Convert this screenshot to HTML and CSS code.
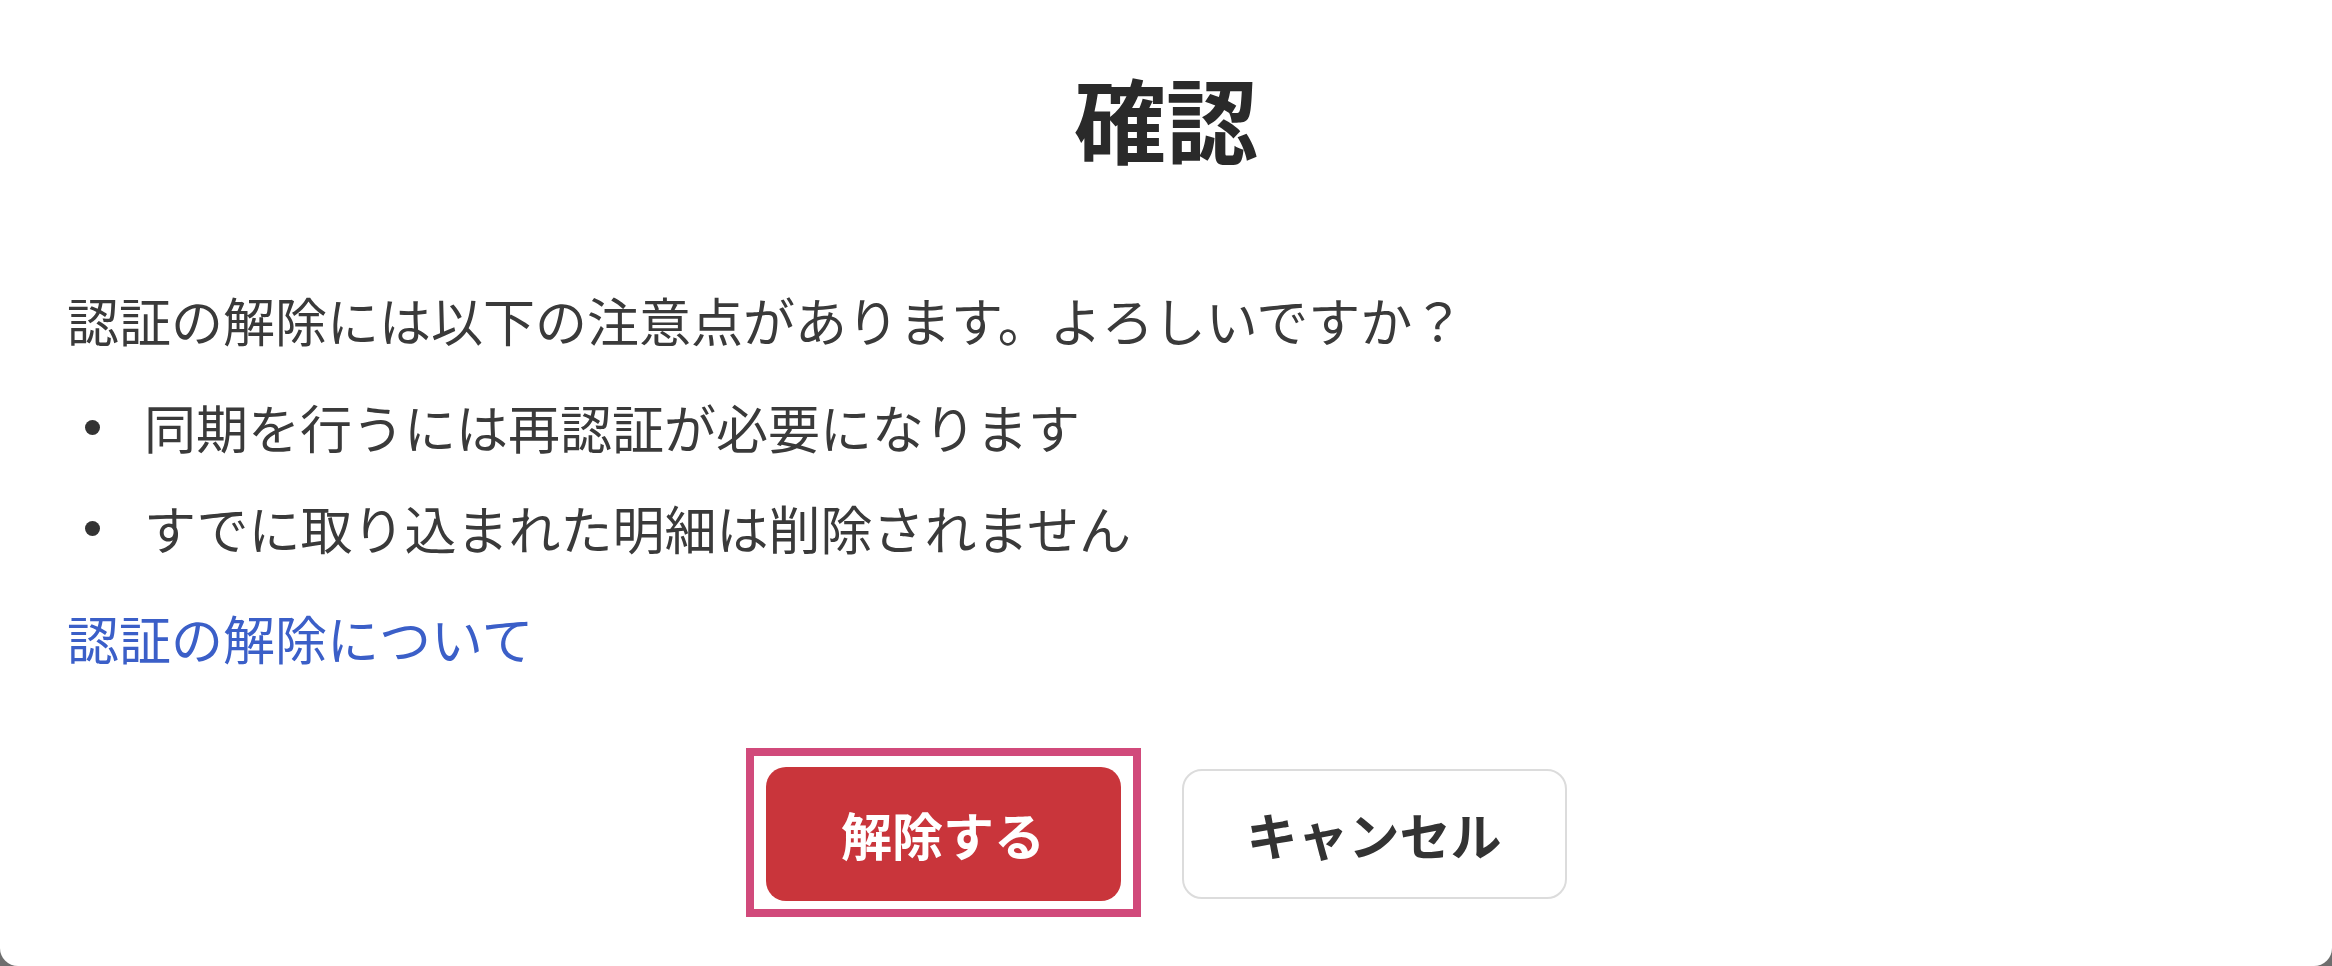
FILE: index.html
```html
<!DOCTYPE html>
<html lang="ja">
<head>
<meta charset="utf-8">
<title>確認</title>
<link rel="stylesheet" href="styles.css">
</head>
<body>
<div class="dialog">
  <h1 class="title">確認</h1>
  <p class="message">認証の解除には以下の注意点があります。よろしいですか？</p>
  <ul class="notes">
    <li class="note">同期を行うには再認証が必要になります</li>
    <li class="note">すでに取り込まれた明細は削除されません</li>
  </ul>
  <a class="help-link" href="#">認証の解除について</a>
  <div class="actions">
    <button class="btn btn-danger">解除する</button>
    <button class="btn btn-cancel">キャンセル</button>
  </div>
</div>
</body>
</html>
```
FILE: styles.css
```css
html, body {
  margin: 0;
  padding: 0;
}
body {
  background: #6e6e6e;
  width: 2332px;
  height: 966px;
  overflow: hidden;
  font-family: "Noto Sans CJK JP", "Noto Sans", sans-serif;
  color: #333333;
}
.dialog {
  box-sizing: border-box;
  width: 2332px;
  height: 966px;
  background: #ffffff;
  border-radius: 0 0 18px 18px;
  padding: 67px 67px 0;
  display: flex;
  flex-direction: column;
}
.title {
  margin: 0;
  text-align: center;
  font-size: 92px;
  line-height: 100px;
  font-weight: 700;
  color: #2a2a2a;
}
.message {
  margin: 123px 0 0;
  font-size: 52px;
  line-height: 60px;
  color: #3a3a3a;
}
.notes {
  list-style: none;
  margin: 47px 0 0;
  padding: 0;
  display: flex;
  flex-direction: column;
  gap: 41px;
}
.note {
  position: relative;
  padding-left: 77px;
  font-size: 52px;
  line-height: 60px;
  color: #3a3a3a;
}
.note::before {
  content: "";
  position: absolute;
  left: 18px;
  top: 23px;
  width: 15px;
  height: 15px;
  border-radius: 50%;
  background: #333333;
}
.help-link {
  align-self: flex-start;
  margin-top: 50px;
  font-size: 52px;
  line-height: 60px;
  color: #3b5fc8;
  text-decoration: none;
}
.actions {
  margin-top: 99px;
  display: flex;
  justify-content: center;
  gap: 61px;
}
.btn {
  font-family: "Noto Sans CJK JP", "Noto Sans", sans-serif;
  font-size: 51px;
  font-weight: 700;
  border-radius: 20px;
  box-sizing: border-box;
  cursor: pointer;
}
.btn-danger {
  position: relative;
  width: 355px;
  height: 134px;
  background: #c9353b;
  color: #ffffff;
  border: none;
}
.btn-danger::before {
  content: "";
  position: absolute;
  left: -20px;
  top: -19px;
  right: -20px;
  bottom: -16px;
  border: 8px solid #d14a7b;
  pointer-events: none;
}
.btn-cancel {
  width: 385px;
  height: 130px;
  margin-top: 2px;
  background: #ffffff;
  color: #333333;
  border: 2px solid #dcdcdc;
}
```
